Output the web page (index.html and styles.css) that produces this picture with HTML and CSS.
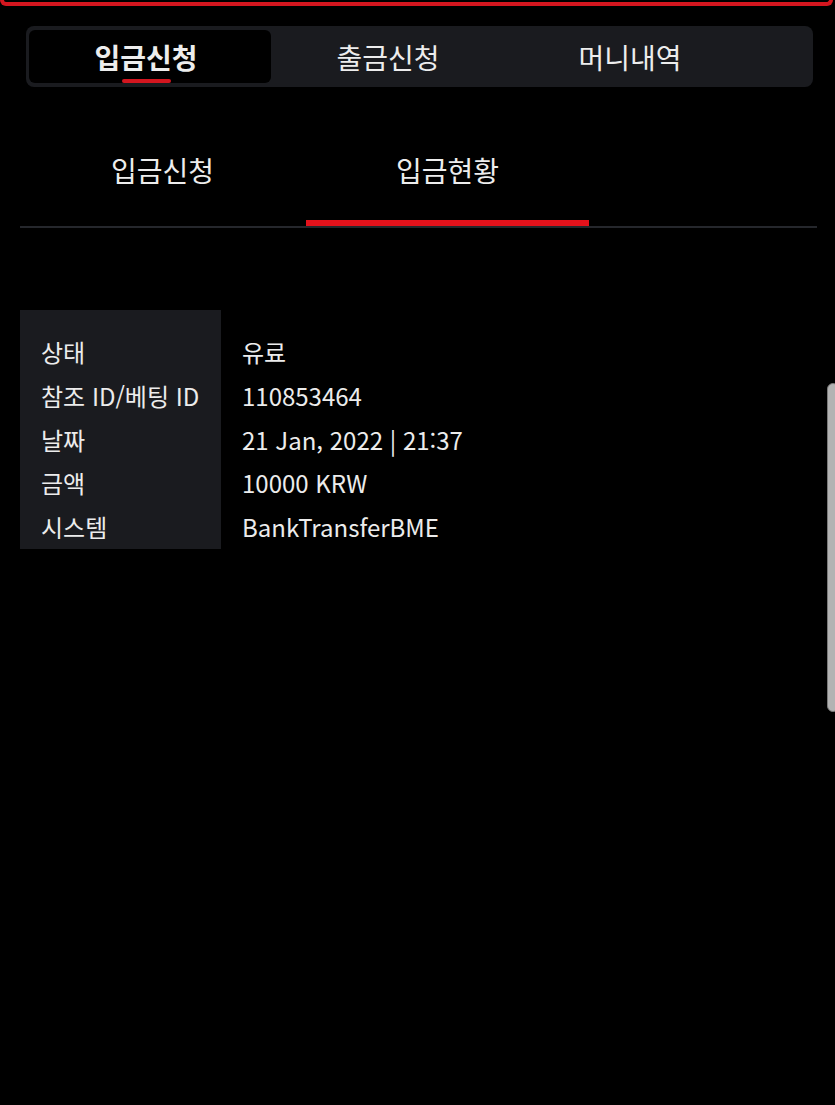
FILE: index.html
```html
<!DOCTYPE html>
<html lang="ko">
<head>
<meta charset="utf-8">
<title>입금현황</title>
<link rel="stylesheet" href="styles.css">
</head>
<body>
<div class="top-edge"></div>
<nav class="main-tabs">
  <div class="main-tab active"><span class="main-tab-label">입금신청</span><span class="main-tab-mark"></span></div>
  <div class="main-tab"><span class="main-tab-label">출금신청</span><span class="main-tab-mark"></span></div>
  <div class="main-tab"><span class="main-tab-label">머니내역</span><span class="main-tab-mark"></span></div>
</nav>
<div class="sub-tabs">
  <div class="sub-tab"><span class="sub-tab-label">입금신청</span><span class="sub-tab-mark"></span></div>
  <div class="sub-tab active"><span class="sub-tab-label">입금현황</span><span class="sub-tab-mark"></span></div>
</div>
<section class="details">
  <div class="details-labels">
    <div class="row">상태</div>
    <div class="row">참조 ID/베팅 ID</div>
    <div class="row">날짜</div>
    <div class="row">금액</div>
    <div class="row">시스템</div>
  </div>
  <div class="details-values">
    <div class="row">유료</div>
    <div class="row">110853464</div>
    <div class="row">21 Jan, 2022 | 21:37</div>
    <div class="row">10000 KRW</div>
    <div class="row">BankTransferBME</div>
  </div>
</section>
<div class="scroll-thumb"></div>
</body>
</html>
```
FILE: styles.css
```css
html, body {
  margin: 0;
  padding: 0;
  background: #000;
}
body {
  width: 835px;
  min-height: 1105px;
  font-family: "Noto Sans CJK KR", "Noto Sans", sans-serif;
  color: #ececec;
  overflow: hidden;
}
.top-edge {
  width: 833px;
  height: 6px;
  box-sizing: border-box;
  border: 4px solid #d3161f;
  border-top: none;
  border-radius: 0 0 9px 9px;
}
.main-tabs {
  display: flex;
  margin: 20px 0 0 26px;
  width: 787px;
  height: 61px;
  box-sizing: border-box;
  padding: 4px 3px;
  background: #1a1b1f;
  border-radius: 8px;
}
.main-tab {
  width: 242px;
  box-sizing: border-box;
  padding: 9px 8px 0 0;
  display: flex;
  flex-direction: column;
  align-items: center;
  border-radius: 6px;
}
.main-tab.active {
  background: #000;
}
.main-tab-label {
  font-size: 28px;
  line-height: 36px;
  color: #ededed;
}
.main-tab.active .main-tab-label {
  font-weight: 700;
}
.main-tab-mark {
  width: 49px;
  height: 4px;
  margin-top: 4px;
  border-radius: 2px;
}
.main-tab.active .main-tab-mark {
  background: #d3161f;
}
.sub-tabs {
  display: flex;
  margin: 65px 0 0 20px;
  width: 797px;
  border-bottom: 2px solid #25272c;
}
.sub-tab {
  width: 285px;
  display: flex;
  flex-direction: column;
  align-items: center;
}
.sub-tab-label {
  font-size: 28px;
  line-height: 36px;
  color: #ededed;
}
.sub-tab-mark {
  width: 283px;
  height: 6px;
  margin-top: 32px;
}
.sub-tab.active .sub-tab-mark {
  background: #e3121b;
}
.details {
  display: flex;
  margin: 82px 0 0 20px;
  font-size: 24px;
}
.details-labels {
  width: 201px;
  box-sizing: border-box;
  padding: 20px 0 0 21px;
  background: #1a1b1f;
}
.details-values {
  padding: 20px 0 0 21px;
}
.row {
  line-height: 43.8px;
  height: 43.8px;
  white-space: nowrap;
}
.scroll-thumb {
  position: fixed;
  left: 827px;
  top: 383px;
  width: 12px;
  height: 329px;
  box-sizing: border-box;
  background: #b3b3b3;
  border: 1px solid #7a7a7a;
  border-radius: 6px;
}
```
